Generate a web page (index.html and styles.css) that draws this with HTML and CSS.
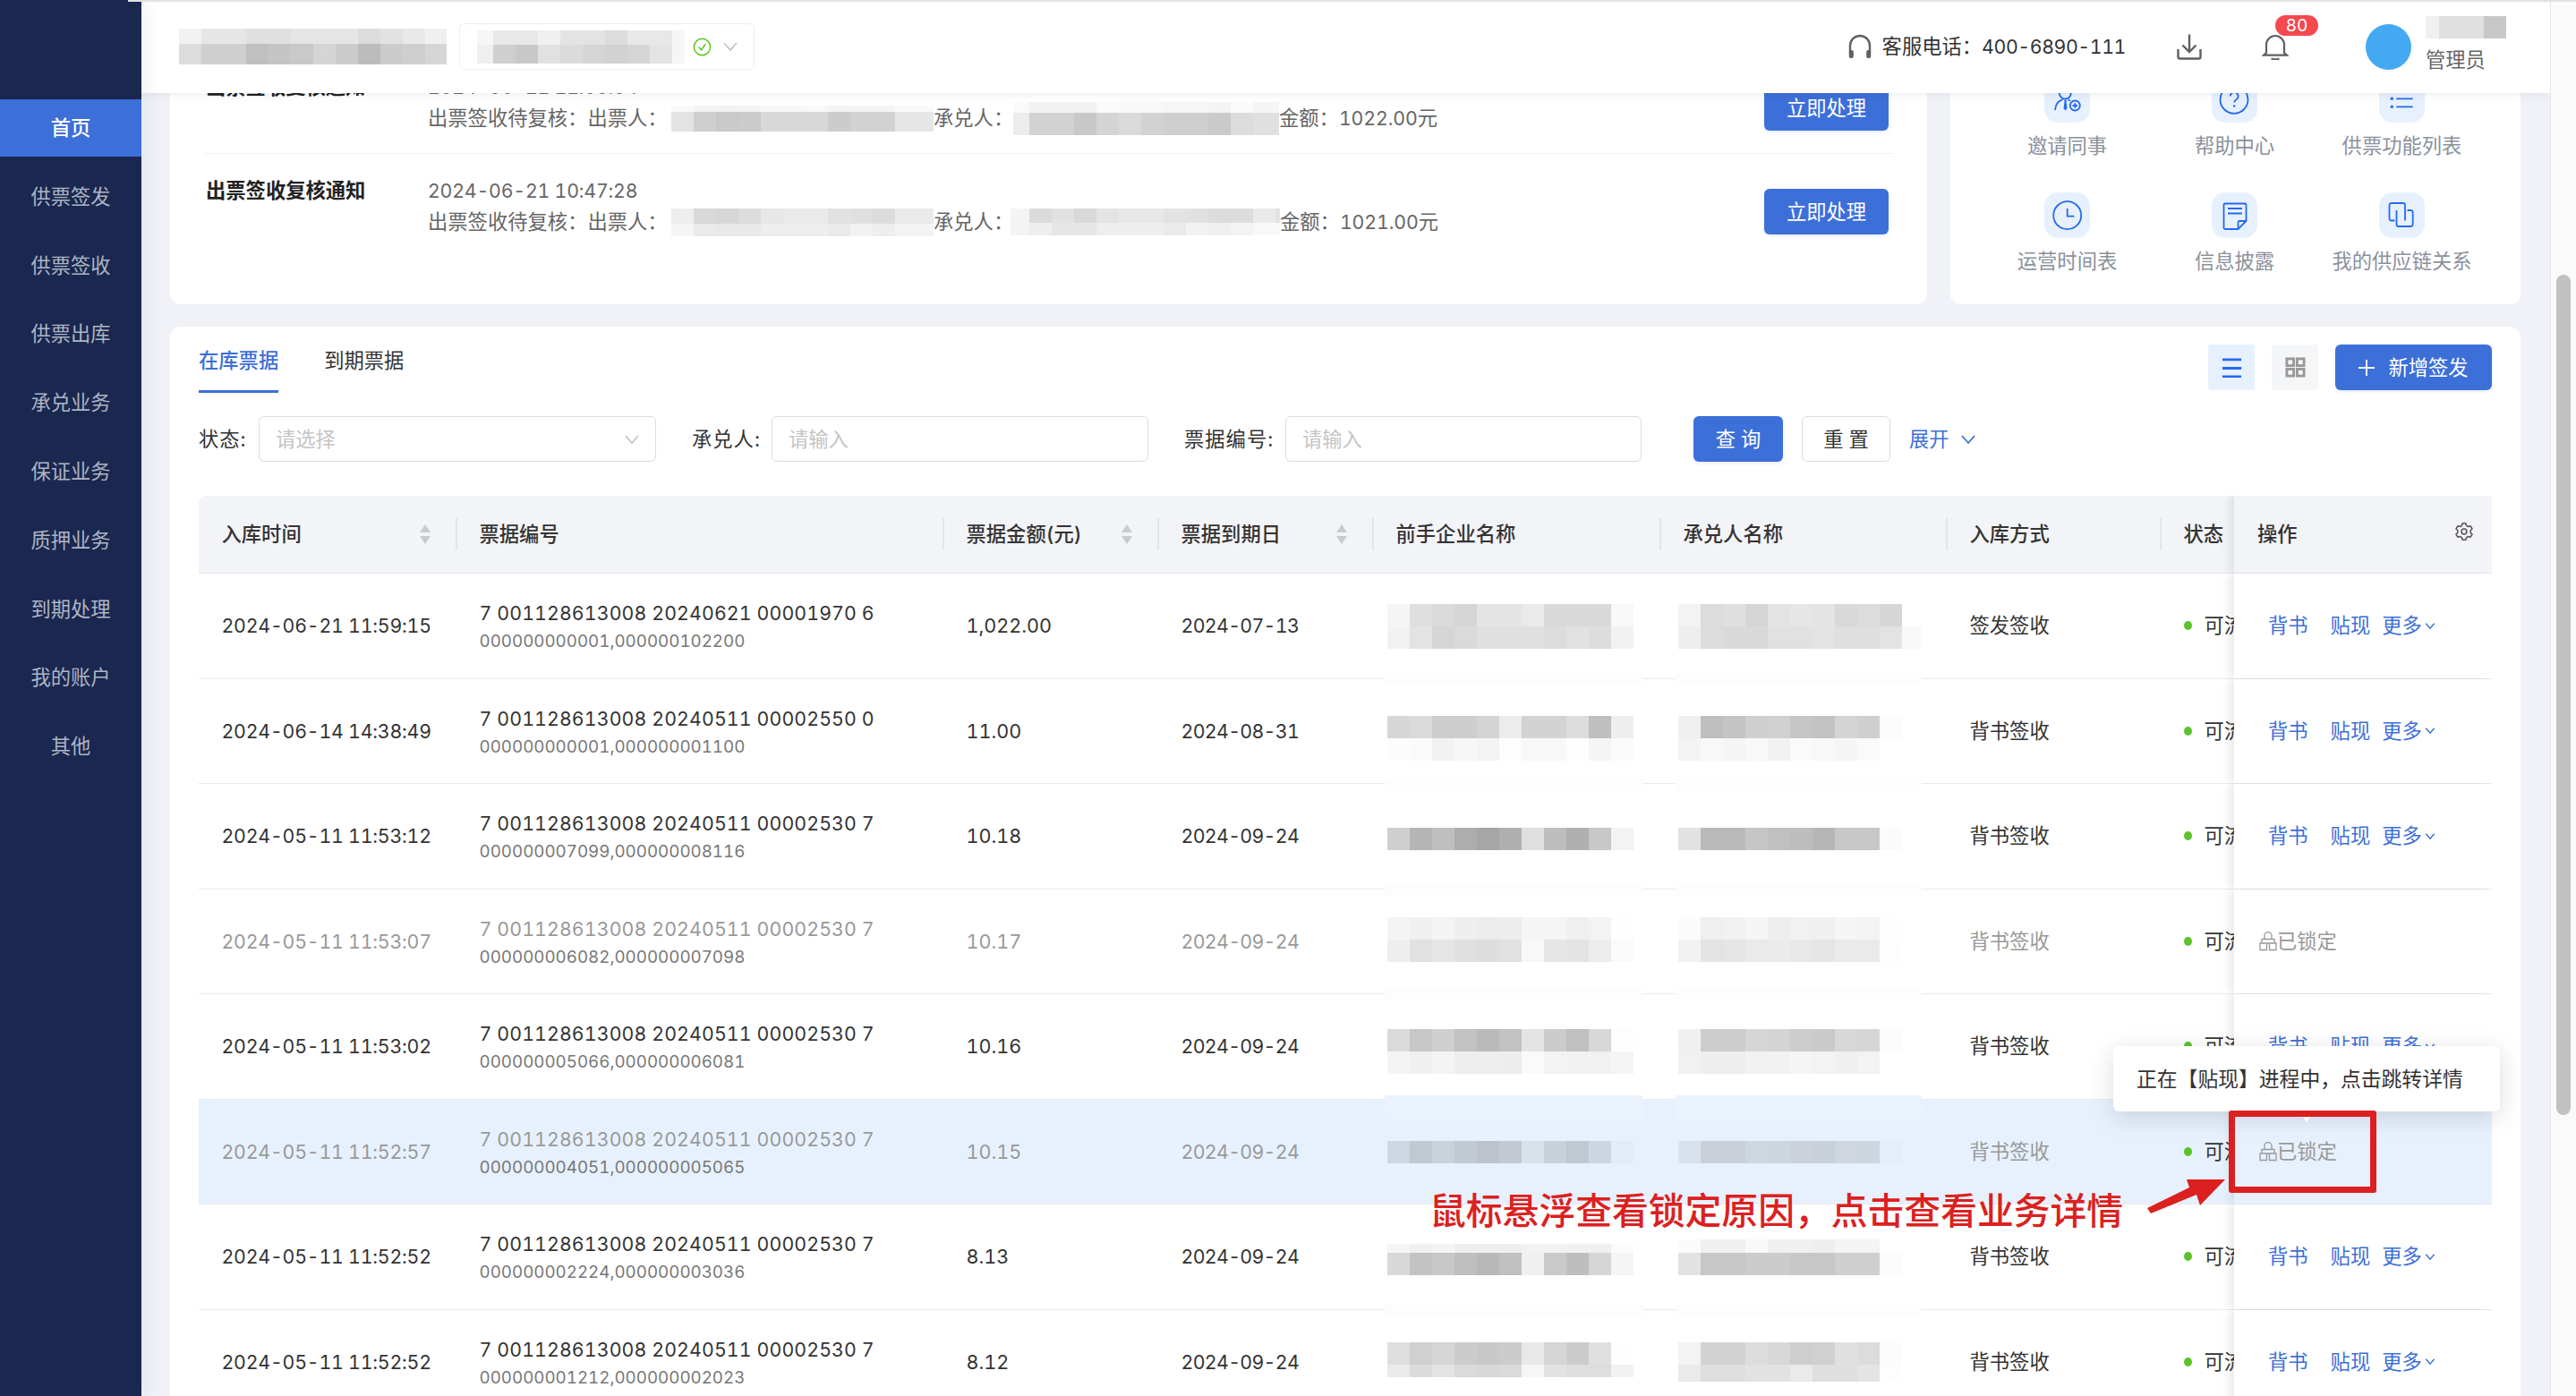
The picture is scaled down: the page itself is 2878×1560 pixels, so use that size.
FILE: index.html
```html
<!DOCTYPE html>
<html lang="zh-CN">
<head>
<meta charset="utf-8">
<title>供票管理</title>
<link rel="stylesheet" href="styles.css">
</head>
<body>
<nav class="sidebar">
  <a class="nav-item active">首页</a>
  <a class="nav-item">供票签发</a>
  <a class="nav-item">供票签收</a>
  <a class="nav-item">供票出库</a>
  <a class="nav-item">承兑业务</a>
  <a class="nav-item">保证业务</a>
  <a class="nav-item">质押业务</a>
  <a class="nav-item">到期处理</a>
  <a class="nav-item">我的账户</a>
  <a class="nav-item">其他</a>
</nav>
<div class="main">
  <header class="topbar">
    <div class="blur h1"><i class="band h1t"></i><i class="band h1b"></i></div>
    <div class="org">
      <div class="blur h2"><i class="band h2t"></i><i class="band h2b"></i></div>
      <svg class="ic-check" viewBox="0 0 22 22"><circle cx="11" cy="11" r="9.6"/><path d="M7 11l3 3.4 5-7"/></svg>
      <svg class="chev chev-org" viewBox="0 0 18 12"><path d="M2 2l7 8 7-8"/></svg>
    </div>
    <div class="top-right">
      <svg class="ic-head" viewBox="0 0 28 28"><path class="ln" d="M3 21V13a11 11 0 0 1 22 0v8"/><rect x="1.8" y="18" width="5" height="9" rx="2"/><rect x="21.2" y="18" width="5" height="9" rx="2"/></svg>
      <span class="phone">客服电话：<span class="tel">400-6890-111</span></span>
      <svg class="ic-down" viewBox="0 0 28 30"><path d="M14 1.5v19M6.5 13.5l7.5 7.5 7.5-7.5M1.5 18v8.5a2 2 0 0 0 2 2h21a2 2 0 0 0 2-2V18"/></svg>
      <div class="bell">
        <svg class="ic-bell" viewBox="0 0 30 30"><path d="M5 22V13a10 10 0 0 1 20 0v9l3 2.6H2z"/><path d="M10.5 28.4c2.8 1.2 6.200 1.200 9 0"/></svg>
        <span class="badge">80</span>
      </div>
      <div class="avatar"></div>
      <div class="user">
        <div class="blur u1"><i class="band u1a"></i></div>
        <div class="role">管理员</div>
      </div>
    </div>
  </header>
  <div class="view">
    <div class="top-row">
      <section class="card notices">
        <div class="notice">
          <h4>出票签收复核通知</h4>
          <div class="notice-body">
            <div class="time">2024-06-21 11:00:04</div>
            <div class="desc">
              <span>出票签收待复核：出票人：</span>
              <div class="blur n1"><i class="band n1a1"></i><i class="band n1a2"></i></div>
              <span>承兑人：</span>
              <div class="blur n2"><i class="band n1b1"></i><i class="band n1b2"></i></div>
              <span>金额：<span class="num">1022.00</span>元</span>
            </div>
          </div>
          <button class="btn primary act">立即处理</button>
        </div>
        <div class="notice">
          <h4>出票签收复核通知</h4>
          <div class="notice-body">
            <div class="time">2024-06-21 10:47:28</div>
            <div class="desc">
              <span>出票签收待复核：出票人：</span>
              <div class="blur n3"><i class="band n2a1"></i><i class="band n2a2"></i></div>
              <span>承兑人：</span>
              <div class="blur n4"><i class="band n2b1"></i><i class="band n2b2"></i></div>
              <span>金额：<span class="num">1021.00</span>元</span>
            </div>
          </div>
          <button class="btn primary act">立即处理</button>
        </div>
      </section>
      <section class="card quick">
        <div class="qk">
          <div class="tile"><svg viewBox="0 0 51 51"><circle cx="23.300" cy="18" r="6.500"/><path d="M12 37c.6-6.500 4.600-10.500 8.500-11.800M26.500 25.500c1 .3 1.800.7 2.500 1.200"/><path class="fill" d="M22 26h3l-.5 2 1 7-2 2.500-2-2.500 1-7z"/><circle cx="34.300" cy="32" r="5.500"/><path d="M31.500 32h5.600M34.300 29.200v5.600"/></svg></div>
          <span>邀请同事</span>
        </div>
        <div class="qk">
          <div class="tile"><svg viewBox="0 0 51 51"><circle cx="25" cy="25.300" r="15.500"/><path d="M20.800 21.500a4.400 4.400 0 1 1 6.900 3.600c-1.500 1-2.500 1.900-2.500 3.400"/><circle class="fill" cx="25.200" cy="32.500" r="1.300"/></svg></div>
          <span>帮助中心</span>
        </div>
        <div class="qk">
          <div class="tile"><svg viewBox="0 0 51 51"><circle class="fill" cx="14.300" cy="15.300" r="1.700"/><circle class="fill" cx="14.300" cy="24.300" r="1.700"/><circle class="fill" cx="14.300" cy="33.300" r="1.700"/><path d="M19.300 15.300h18.400M19.300 24.300h18.400M19.300 33.300h18.400"/></svg></div>
          <span>供票功能列表</span>
        </div>
        <div class="qk">
          <div class="tile"><svg viewBox="0 0 51 51"><circle cx="25.700" cy="25.700" r="15.500"/><path d="M25.700 18v8.700h7.800"/></svg></div>
          <span>运营时间表</span>
        </div>
        <div class="qk">
          <div class="tile"><svg viewBox="0 0 51 51"><path d="M15 12.500h22a1.500 1.500 0 0 1 1.500 1.500v18l-9 9H15a1.500 1.500 0 0 1-1.500-1.500V14a1.500 1.500 0 0 1 1.500-1.500z"/><path d="M38.500 32H31a1.500 1.500 0 0 0-1.500 1.500V41M18 18h16M18 23.500h16"/></svg></div>
          <span>信息披露</span>
        </div>
        <div class="qk">
          <div class="tile"><svg viewBox="0 0 51 51"><path d="M17.500 31.500H13.800a2.300 2.300 0 0 1-2.300-2.300V14.300a2.300 2.300 0 0 1 2.300-2.300h12.900a2.300 2.300 0 0 1 2.300 2.300v17.200"/><path d="M31.500 20h3.900a2.300 2.300 0 0 1 2.300 2.300v13.400a2.300 2.300 0 0 1-2.300 2.300H21.800a2.300 2.300 0 0 1-2.300-2.300V20"/></svg></div>
          <span>我的供应链关系</span>
        </div>
      </section>
    </div>

    <section class="card bills">
      <div class="toolbar">
        <div class="tabs">
          <a class="tab on">在库票据</a>
          <a class="tab">到期票据</a>
        </div>
        <div class="tools">
          <button class="tool on"><svg viewBox="0 0 24 24"><path d="M1 3h22M1 13h22M1 23h22"/></svg></button>
          <button class="tool"><svg viewBox="0 0 24 24"><rect x="2" y="2" width="8" height="8"/><rect x="14" y="2" width="8" height="8"/><rect x="2" y="14" width="8" height="8"/><rect x="14" y="14" width="8" height="8"/></svg></button>
          <button class="btn primary add"><svg viewBox="0 0 18 18"><path d="M9 0v18M0 9h18"/></svg>新增签发</button>
        </div>
      </div>

      <div class="filters">
        <label class="l-a">状态:</label>
        <div class="field w-a"><span>请选择</span><svg class="chev" viewBox="0 0 18 12"><path d="M2 2l7 8 7-8"/></svg></div>
        <label class="l-b">承兑人:</label>
        <div class="field w-b"><span>请输入</span></div>
        <label class="l-c">票据编号:</label>
        <div class="field w-c"><span>请输入</span></div>
        <button class="btn primary query">查 询</button>
        <button class="btn plain reset">重 置</button>
        <a class="expand">展开<svg class="chev blue" viewBox="0 0 18 12"><path d="M2 2l7 8 7-8"/></svg></a>
      </div>

      <div class="table">
        <div class="row head">
          <div class="c th">入库时间<i class="sort"></i></div>
          <div class="c th">票据编号</div>
          <div class="c th">票据金额(元)<i class="sort"></i></div>
          <div class="c th">票据到期日<i class="sort"></i></div>
          <div class="c th">前手企业名称</div>
          <div class="c th">承兑人名称</div>
          <div class="c th">入库方式</div>
          <div class="c th st">状态</div>
          <div class="c ops th-ops">操作<svg class="gear" viewBox="0 0 24 24"><path d="M10 2h4l.8 2.700 2.300 1.300 2.700-.7 2 3.400-2 2v2.600l2 2-2 3.400-2.700-.7-2.300 1.300L14 22h-4l-.8-2.700-2.300-1.300-2.700.7-2-3.400 2-2v-2.600l-2-2 2-3.400 2.700.7 2.300-1.300z"/><circle cx="12" cy="12" r="3.200"/></svg></div>
        </div>

        <div class="row">
          <div class="c d-time">2024-06-21 11:59:15</div>
          <div class="c stack"><div class="no">7 001128613008 20240621 00001970 6</div><div class="sub">000000000001,000000102200</div></div>
          <div class="c d-amt">1,022.00</div>
          <div class="c d-date">2024-07-13</div>
          <div class="c mos a off-34"><div class="blur"><i class="band r1a1"></i><i class="band r1a2"></i></div></div>
          <div class="c mos b off-34"><div class="blur"><i class="band r1b1"></i><i class="band r1b2"></i></div></div>
          <div class="c">签发签收</div>
          <div class="c st"><i class="dot"></i>可流通</div>
          <div class="c ops"><a>背书</a><a>贴现</a><a class="more">更多<svg class="chev blue" viewBox="0 0 18 12"><path d="M2 2l7 8 7-8"/></svg></a></div>
        </div>

        <div class="row">
          <div class="c d-time">2024-06-14 14:38:49</div>
          <div class="c stack"><div class="no">7 001128613008 20240511 00002550 0</div><div class="sub">000000000001,000000001100</div></div>
          <div class="c d-amt">11.00</div>
          <div class="c d-date">2024-08-31</div>
          <div class="c mos a off-41"><div class="blur"><i class="band r2a1"></i><i class="band r2a2"></i></div></div>
          <div class="c mos b off-41"><div class="blur"><i class="band r2b1"></i><i class="band r2b2"></i></div></div>
          <div class="c">背书签收</div>
          <div class="c st"><i class="dot"></i>可流通</div>
          <div class="c ops"><a>背书</a><a>贴现</a><a class="more">更多<svg class="chev blue" viewBox="0 0 18 12"><path d="M2 2l7 8 7-8"/></svg></a></div>
        </div>

        <div class="row">
          <div class="c d-time">2024-05-11 11:53:12</div>
          <div class="c stack"><div class="no">7 001128613008 20240511 00002530 7</div><div class="sub">000000007099,000000008116</div></div>
          <div class="c d-amt">10.18</div>
          <div class="c d-date">2024-09-24</div>
          <div class="c mos a off-49"><div class="blur"><i class="band r3a"></i></div></div>
          <div class="c mos b off-49"><div class="blur"><i class="band r3b"></i></div></div>
          <div class="c">背书签收</div>
          <div class="c st"><i class="dot"></i>可流通</div>
          <div class="c ops"><a>背书</a><a>贴现</a><a class="more">更多<svg class="chev blue" viewBox="0 0 18 12"><path d="M2 2l7 8 7-8"/></svg></a></div>
        </div>

        <div class="row locked">
          <div class="c d-time">2024-05-11 11:53:07</div>
          <div class="c stack"><div class="no">7 001128613008 20240511 00002530 7</div><div class="sub">000000006082,000000007098</div></div>
          <div class="c d-amt">10.17</div>
          <div class="c d-date">2024-09-24</div>
          <div class="c mos a off-31"><div class="blur"><i class="band r4a1"></i><i class="band r4a2"></i></div></div>
          <div class="c mos b off-31"><div class="blur"><i class="band r4b1"></i><i class="band r4b2"></i></div></div>
          <div class="c">背书签收</div>
          <div class="c st"><i class="dot"></i>可流通</div>
          <div class="c ops lock"><svg class="ic-lock" viewBox="0 0 20 22"><path d="M6 8V4.500a4 4 0 0 1 8 0V8M3 8.500h14v4.500H3zM1 13h7.500v7.500H1zM11.500 13H19v7.500h-7.500z"/></svg>已锁定</div>
        </div>

        <div class="row tint-next">
          <div class="c d-time">2024-05-11 11:53:02</div>
          <div class="c stack"><div class="no">7 001128613008 20240511 00002530 7</div><div class="sub">000000005066,000000006081</div></div>
          <div class="c d-amt">10.16</div>
          <div class="c d-date">2024-09-24</div>
          <div class="c mos a off-39"><div class="blur"><i class="band r5a1"></i><i class="band r5a2"></i></div></div>
          <div class="c mos b off-39"><div class="blur"><i class="band r5b1"></i><i class="band r5b2"></i></div></div>
          <div class="c">背书签收</div>
          <div class="c st"><i class="dot"></i>可流通</div>
          <div class="c ops"><a>背书</a><a>贴现</a><a class="more">更多<svg class="chev blue" viewBox="0 0 18 12"><path d="M2 2l7 8 7-8"/></svg></a></div>
        </div>

        <div class="row locked hover">
          <div class="c d-time">2024-05-11 11:52:57</div>
          <div class="c stack"><div class="no">7 001128613008 20240511 00002530 7</div><div class="sub">000000004051,000000005065</div></div>
          <div class="c d-amt">10.15</div>
          <div class="c d-date">2024-09-24</div>
          <div class="c mos a off-46"><div class="blur"><i class="band r6a"></i></div></div>
          <div class="c mos b off-46"><div class="blur"><i class="band r6b"></i></div></div>
          <div class="c">背书签收</div>
          <div class="c st"><i class="dot"></i>可流通</div>
          <div class="c ops lock"><svg class="ic-lock" viewBox="0 0 20 22"><path d="M6 8V4.500a4 4 0 0 1 8 0V8M3 8.500h14v4.500H3zM1 13h7.500v7.500H1zM11.500 13H19v7.500h-7.500z"/></svg>已锁定</div>
        </div>

        <div class="row">
          <div class="c d-time">2024-05-11 11:52:52</div>
          <div class="c stack"><div class="no">7 001128613008 20240511 00002530 7</div><div class="sub">000000002224,000000003036</div></div>
          <div class="c d-amt">8.13</div>
          <div class="c d-date">2024-09-24</div>
          <div class="c mos a off-44"><div class="blur"><i class="band r7a1"></i><i class="band r7a2"></i></div></div>
          <div class="c mos b off-39"><div class="blur"><i class="band r7b1"></i><i class="band r7b2"></i></div></div>
          <div class="c">背书签收</div>
          <div class="c st"><i class="dot"></i>可流通</div>
          <div class="c ops"><a>背书</a><a>贴现</a><a class="more">更多<svg class="chev blue" viewBox="0 0 18 12"><path d="M2 2l7 8 7-8"/></svg></a></div>
        </div>

        <div class="row">
          <div class="c d-time">2024-05-11 11:52:52</div>
          <div class="c stack"><div class="no">7 001128613008 20240511 00002530 7</div><div class="sub">000000001212,000000002023</div></div>
          <div class="c d-amt">8.12</div>
          <div class="c d-date">2024-09-24</div>
          <div class="c mos a off-36"><div class="blur"><i class="band r8a1"></i><i class="band r8a2"></i></div></div>
          <div class="c mos b off-36"><div class="blur"><i class="band r8b1"></i><i class="band r8b2"></i></div></div>
          <div class="c">背书签收</div>
          <div class="c st"><i class="dot"></i>可流通</div>
          <div class="c ops"><a>背书</a><a>贴现</a><a class="more">更多<svg class="chev blue" viewBox="0 0 18 12"><path d="M2 2l7 8 7-8"/></svg></a></div>
        </div>
      </div>
    </section>
  </div>
</div>
<div class="scrollbar"><div class="thumb"></div></div>

<div class="tooltip">正在【贴现】进程中，点击跳转详情</div>
<div class="red-box"></div>
<svg class="red-arrow" viewBox="0 0 100 50"><polygon points="9,40 56,17 53,8 96,8 68,37 64,25 13,46"/></svg>
<div class="red-note">鼠标悬浮查看锁定原因，点击查看业务详情</div>
</body>
</html>
```
FILE: styles.css
```css
* { box-sizing: border-box; }
html, body { margin: 0; padding: 0; }
body {
  position: relative;
  display: flex;
  width: 2878px;
  height: 1560px;
  overflow: hidden;
  background: #f0f2f7;
  color: #333;
  font: 22.300px/30px Inter, "Noto Sans CJK SC", sans-serif;
  font-variant-numeric: tabular-nums;
}
body::before {
  content: "";
  position: absolute;
  left: 143px;
  right: 0;
  top: 0;
  height: 2px;
  background: #e2e2e2;
  z-index: 9;
}
i { font-style: normal; }
h4 { margin: 0; }
button { font: inherit; padding: 0; cursor: pointer; }

/* numeric text */
.time, .d-time { font-size: 21.300px; letter-spacing: -.2px; }
.no { font-size: 21.300px; letter-spacing: .12px; }
.d-date { font-size: 21.300px; letter-spacing: -.65px; }
.d-amt { font-size: 21.600px; }
.num { font-size: 21.300px; letter-spacing: -.1px; }
.tel { font-size: 21.300px; letter-spacing: -.4px; }

/* sidebar */
.sidebar {
  flex: 0 0 158px;
  padding-top: 111px;
  background: #1a2850;
  box-shadow: 8px 0 16px rgba(30, 40, 80, .05);
  position: relative;
  z-index: 6;
}
.nav-item {
  display: flex;
  align-items: center;
  justify-content: center;
  height: 64px;
  margin-bottom: 12.8px;
  color: #aeb4c3;
}
.nav-item.active { background: #3d6fd8; color: #fff; font-weight: 500; }

/* main column */
.main { flex: 1; min-width: 0; display: flex; flex-direction: column; }
.topbar {
  flex: 0 0 104px;
  display: flex;
  align-items: center;
  padding: 0 49px 0 42px;
  background: #fff;
  box-shadow: 0 2px 10px rgba(0, 0, 0, .07);
  position: relative;
  z-index: 5;
}
.org {
  display: flex;
  align-items: center;
  width: 330px;
  height: 52px;
  margin-left: 14px;
  padding-left: 19px;
  border: 1px solid #eeeeee;
  border-radius: 6px;
}
.ic-check { width: 21px; height: 21px; margin-left: 9px; fill: none; stroke: #52c41a; stroke-width: 1.500; }
.chev { width: 18px; height: 12px; fill: none; stroke: #c0c0c0; stroke-width: 1.500; flex: none; }
.chev.blue { stroke: #3d6fd8; stroke-width: 1.800; }
.chev-org { margin-left: 12px; }
.top-right { margin-left: auto; display: flex; align-items: center; }
.ic-head { width: 28px; height: 28px; fill: #5f5f5f; }
.ic-head .ln { fill: none; stroke: #5f5f5f; stroke-width: 2.400; }
.phone { margin-left: 11px; color: #333; }
.ic-down { width: 28px; height: 30px; margin-left: 57px; fill: none; stroke: #5f5f5f; stroke-width: 2.400; }
.bell { position: relative; margin-left: 67px; height: 30px; }
.ic-bell { display: block; width: 30px; height: 30px; fill: none; stroke: #5f5f5f; stroke-width: 2.200; }
.badge {
  position: absolute;
  left: 15px;
  top: -20px;
  width: 48px;
  height: 23px;
  border-radius: 12px;
  background: #f5484f;
  color: #fff;
  font-size: 19px;
  line-height: 23px;
  text-align: center;
}
.avatar { width: 51px; height: 51px; margin-left: 86px; border-radius: 50%; background: #43a9f2; }
.user { margin-left: 16px; width: 90px; }
.role { color: #666; line-height: 30px; margin-top: 9px; }

/* scrolled content */
.view { flex: 1; min-height: 0; overflow: hidden; padding: 0 33px 0 32px; }
.top-row { display: flex; gap: 26px; height: 296px; margin-top: -60px; }
.card { background: #fff; border-radius: 12px; }
.notices { width: 1963px; padding: 12px 38px 0; }
.notice {
  display: flex;
  height: 116px;
  padding-top: 26px;
  border-bottom: 1px solid #f2f2f2;
}
.notice:last-child { border-bottom: 0; }
.notice h4 { width: 250px; padding-left: 2px; font-size: 22.300px; font-weight: 600; color: #222; white-space: nowrap; }
.notice-body { flex: 1; color: #666; }
.desc { display: flex; align-items: center; height: 30px; margin-top: 5px; white-space: nowrap; }
.desc > span:first-child { width: 264px; }
.desc > span:nth-child(3) { width: 88px; }
.btn { border: 0; border-radius: 6px; white-space: nowrap; }
.btn.primary { background: #3d6fd8; color: #fff; box-shadow: 0 2px 4px rgba(61, 111, 216, .12); }
.act { width: 139px; height: 51px; margin: 13px 5px 0 0; }

.quick {
  width: 637px;
  padding: 42px 38px 0 37px;
  display: grid;
  grid-template-columns: repeat(3, 187px);
  grid-auto-rows: 92px;
  row-gap: 37px;
  justify-items: center;
  color: #8b919c;
}
.qk { display: flex; flex-direction: column; align-items: center; white-space: nowrap; }
.qk span { margin-top: 11px; }
.tile { width: 51px; height: 51px; border-radius: 15px; background: #e7f1fe; }
.tile svg { display: block; width: 51px; height: 51px; fill: none; stroke: #2468f2; stroke-width: 1.800; stroke-linejoin: round; }
.tile svg .fill { fill: #2468f2; stroke: none; }

/* bills card */
.bills { margin-top: 25px; height: 1300px; padding: 20px 32px 0; }
.toolbar { display: flex; height: 54px; }
.tabs { display: flex; gap: 51px; }
.tab { display: block; height: 54px; line-height: 36px; color: #333; }
.tab.on { color: #3d6fd8; border-bottom: 3px solid #3d6fd8; font-weight: 500; }
.tools { margin-left: auto; display: flex; gap: 19px; height: 51px; }
.tool { width: 52px; height: 51px; border: 0; border-radius: 3px; background: #f5f6f8; display: flex; align-items: center; justify-content: center; }
.tool svg { width: 23px; height: 23px; fill: none; stroke: #999; stroke-width: 3; }
.tool.on { background: #e7f1fe; }
.tool.on svg { stroke: #2468f2; stroke-width: 3; }
.add { width: 175px; height: 51px; display: flex; align-items: center; justify-content: center; }
.add svg { width: 18px; height: 18px; margin-right: 15px; fill: none; stroke: #fff; stroke-width: 1.800; }

.filters { display: flex; align-items: center; height: 51px; margin-top: 26px; }
.filters label { letter-spacing: 1px; white-space: nowrap; }
.l-a { width: 67px; }
.l-b { width: 89px; margin-left: 40px; }
.l-c { width: 113px; margin-left: 40px; }
.field {
  display: flex;
  align-items: center;
  justify-content: space-between;
  height: 51px;
  padding: 0 17px 0 18px;
  border: 1.500px solid #dcdcdc;
  border-radius: 6px;
  color: #c4c4c4;
}
.w-a { width: 444px; }
.w-b { width: 421px; }
.w-c { width: 398px; }
.query { width: 100px; height: 51px; margin-left: 58px; }
.plain { background: #fff; border: 1.500px solid #dcdcdc; color: #333; }
.reset { width: 99px; height: 51px; margin-left: 21px; }
.expand { margin-left: 21px; display: flex; align-items: center; color: #3d6fd8; }
.expand .chev { margin-left: 12px; }

/* table */
.table { margin-top: 38px; }
.row {
  display: grid;
  grid-template-columns: 287px 544px 240px 240px 321px 320px 239px 83px 288px;
  height: 117.5px;
  border-bottom: 1.500px solid #e9eaee;
}
.row.head { height: 87px; background: #f3f4f8; border-radius: 8px 8px 0 0; font-weight: 500; border-bottom-color: #e6e7ec; }
.c { display: flex; align-items: center; padding-left: 26.500px; white-space: nowrap; min-width: 0; }
.row > .c:first-child { padding-left: 25.500px; }
.th { position: relative; }
.th + .th::before {
  content: "";
  position: absolute;
  left: 0;
  top: 25px;
  width: 2px;
  height: 36px;
  background: #e4e5ea;
}
.sort { position: relative; width: 13px; height: 22px; margin-left: auto; margin-right: 27px; }
.sort::before, .sort::after {
  content: "";
  position: absolute;
  left: 0;
  border-left: 6.500px solid transparent;
  border-right: 6.500px solid transparent;
}
.sort::before { top: 0; border-bottom: 9px solid #c9cbd1; }
.sort::after { bottom: 0; border-top: 9px solid #c9cbd1; }
.stack { display: block; padding-top: 29px; }
.no { line-height: 30px; }
.sub { color: #777; font-size: 18.750px; line-height: 30px; margin-top: 2px; }
.st { overflow: hidden; }
.dot { flex: none; width: 9px; height: 10px; border-radius: 50%; background: #5ac32a; margin-right: 14px; }
.ops {
  position: relative;
  z-index: 2;
  background: #fff;
  padding-left: 38px;
  color: #3d6fd8;
  box-shadow: -5px 0 10px rgba(0, 0, 0, .09);
  clip-path: inset(0 0 -2px -16px);
}
.ops a + a { margin-left: 25px; }
.ops .more { display: flex; align-items: center; margin-left: 13px; }
.more .chev { width: 12px; height: 9px; margin-left: 3px; stroke-width: 2.200; }
.th-ops { background: #f3f4f8; color: #333; padding-left: 26px; }
.gear { width: 22px; height: 24px; margin-left: auto; margin-right: 20px; margin-top: -6px; fill: none; stroke: #555; stroke-width: 1.700; stroke-linejoin: round; }
.lock { padding-left: 28px; color: #999; }
.ic-lock { width: 20px; height: 22px; fill: none; stroke: #999; stroke-width: 1.300; }
.locked > .c:not(.ops):not(.st), .locked .no { color: #999; }
.locked .sub { color: #777; }
.hover { background: #e7f1fe; }
.hover .ops { background: #e7f1fe; }

/* mosaics */
.blur { flex: none; }
.band { display: block; width: 275px; height: 25px; }
.mos { position: relative; align-items: flex-start; }
.mos.a { padding-left: 17px; }
.mos.b { padding-left: 21px; }
.off-34 { padding-top: 34px; }
.off-41 { padding-top: 41.500px; }
.off-49 { padding-top: 49px; }
.off-31 { padding-top: 31.500px; }
.off-39 { padding-top: 39px; }
.off-46 { padding-top: 46.500px; }
.off-44 { padding-top: 44px; }
.off-36 { padding-top: 36.500px; }
.mos::after {
  content: "";
  position: absolute;
  bottom: -8px;
  height: 14px;
  background: #fdfdfd;
}
.mos.a::after { left: 14px; width: 288px; }
.mos.b::after { left: 18px; width: 275px; }
.tint-next .mos::after { background: #eaf3fd; bottom: -22px; height: 26px; }
.hover .mos::after { display: none; }
.r1b2 { width: 272px; }
.r7a1 { height: 10px; }
.r7b1 { height: 15px; }
.r8a2 { height: 14px; }
.r8b2 { height: 19px; }

.r1a1 { background: linear-gradient(90deg,#f5f5f5 25px,#dfdfdf 0 50px,#dadada 0 75px,#d5d5d5 0 100px,#e4e4e4 0 150px,#eaeaea 0 175px,#d9d9d9 0 250px,#f8f8f8 0); }
.r1a2 { background: linear-gradient(90deg,#f2f2f2 25px,#e3e3e3 0 50px,#d5d5d5 0 75px,#dadada 0 100px,#e0e0e0 0 175px,#dcdcdc 0 200px,#e2e2e2 0 225px,#dddddd 0 250px,#f2f2f2 0); }
.r1b1 { background: linear-gradient(90deg,#f3f3f3 25px,#dcdcdc 0 50px,#dfdfdf 0 75px,#d5d5d5 0 100px,#e3e3e3 0 125px,#e6e6e6 0 150px,#e4e4e4 0 175px,#d9d9d9 0 200px,#dcdcdc 0 225px,#d6d6d6 0 250px,transparent 0); }
.r1b2 { background: linear-gradient(90deg,#eeeeee 25px,#dcdcdc 0 50px,#d9d9d9 0 100px,#e1e1e1 0 150px,#e3e3e3 0 175px,#dfdfdf 0 225px,#e3e3e3 0 250px,#f9f9f9 0); }
.r2a1 { background: linear-gradient(90deg,#d6d6d6 25px,#dadada 0 50px,#cdcdcd 0 100px,#d4d4d4 0 125px,#ececec 0 150px,#d3d3d3 0 200px,#dddddd 0 225px,#bfbfbf 0 250px,#eeeeee 0); }
.r2a2 { background: linear-gradient(90deg,#fcfcfc 25px,#fafafa 0 50px,#f2f2f2 0 75px,#f7f7f7 0 100px,#f3f3f3 0 125px,#fdfdfd 0 150px,#f8f8f8 0 200px,#fefefe 0 225px,#f5f5f5 0 250px,#fbfbfb 0); }
.r2b1 { background: linear-gradient(90deg,#f0f0f0 25px,#bfbfbf 0 50px,#c4c4c4 0 75px,#cfcfcf 0 100px,#d1d1d1 0 125px,#c6c6c6 0 150px,#c3c3c3 0 175px,#d4d4d4 0 200px,#cfcfcf 0 225px,#fcfcfc 0 250px,transparent 0); }
.r2b2 { background: linear-gradient(90deg,#f3f3f3 25px,#f8f8f8 0 50px,#f5f5f5 0 75px,#f8f8f8 0 100px,#f2f2f2 0 125px,#fafafa 0 150px,#f8f8f8 0 175px,#f5f5f5 0 200px,#fafafa 0 225px,transparent 0); }
.r3a { background: linear-gradient(90deg,#cfcfcf 25px,#b5b5b5 0 50px,#bfbfbf 0 75px,#adadad 0 100px,#a6a6a6 0 125px,#b0b0b0 0 150px,#e0e0e0 0 175px,#bdbdbd 0 200px,#b0b0b0 0 225px,#c8c8c8 0 250px,#f3f3f3 0); }
.r3b { background: linear-gradient(90deg,#e2e2e2 25px,#b9b9b9 0 75px,#c6c6c6 0 100px,#c0c0c0 0 125px,#bdbdbd 0 150px,#b6b6b6 0 175px,#c7c7c7 0 225px,#fbfbfb 0 250px,transparent 0); }
.r4a1 { background: linear-gradient(90deg,#f4f4f4 25px,#f0f0f0 0 50px,#f4f4f4 0 75px,#eeeeee 0 100px,#ececec 0 125px,#ededed 0 150px,#f5f5f5 0 200px,#efefef 0 225px,#f3f3f3 0 250px,#fefefe 0); }
.r4a2 { background: linear-gradient(90deg,#eeeeee 25px,#e1e1e1 0 50px,#e5e5e5 0 75px,#e0e0e0 0 100px,#dddddd 0 125px,#e1e1e1 0 150px,#f8f8f8 0 175px,#e5e5e5 0 200px,#e3e3e3 0 225px,#ececec 0 250px,#fafafa 0); }
.r4b1 { background: linear-gradient(90deg,#fbfbfb 25px,#efefef 0 50px,#f1f1f1 0 75px,#f5f5f5 0 100px,#eeeeee 0 125px,#f1f1f1 0 150px,#f0f0f0 0 175px,#f5f5f5 0 200px,#f3f3f3 0 225px,#fefefe 0 250px,transparent 0); }
.r4b2 { background: linear-gradient(90deg,#f2f2f2 25px,#e3e3e3 0 50px,#e5e5e5 0 75px,#eaeaea 0 100px,#ebebeb 0 125px,#e8e8e8 0 150px,#e5e5e5 0 175px,#eaeaea 0 225px,#fdfdfd 0 250px,transparent 0); }
.r5a1 { background: linear-gradient(90deg,#dadada 25px,#c7c7c7 0 50px,#cfcfcf 0 75px,#c2c2c2 0 100px,#bababa 0 125px,#c2c2c2 0 150px,#e4e4e4 0 175px,#cccccc 0 200px,#c0c0c0 0 225px,#d8d8d8 0 250px,#fdfdfd 0); }
.r5a2 { background: linear-gradient(90deg,#f4f4f4 25px,#f0f0f0 0 50px,#f4f4f4 0 75px,#eeeeee 0 125px,#ededed 0 150px,#fafafa 0 175px,#f3f3f3 0 200px,#f1f1f1 0 250px,#f5f5f5 0); }
.r5b1 { background: linear-gradient(90deg,#f0f0f0 25px,#cdcdcd 0 75px,#d6d6d6 0 100px,#d4d4d4 0 125px,#cdcdcd 0 150px,#cacaca 0 175px,#d8d8d8 0 200px,#d6d6d6 0 225px,#fcfcfc 0 250px,transparent 0); }
.r5b2 { background: linear-gradient(90deg,#f1f1f1 25px,#eeeeee 0 75px,#f2f2f2 0 125px,#f5f5f5 0 150px,#f3f3f3 0 175px,#f0f0f0 0 200px,#f3f3f3 0 225px,transparent 0); }
.r6a { background: linear-gradient(90deg,#cfd8e2 25px,#c0c8d2 0 50px,#c9d1da 0 75px,#c1c9d2 0 100px,#bcc3cc 0 125px,#c2c9d2 0 150px,#d9e1ea 0 175px,#c8d0d9 0 200px,#c0c8d1 0 225px,#cdd5e0 0 250px,#e3ebf6 0); }
.r6b { background: linear-gradient(90deg,#d9e1ec 25px,#c8cfd8 0 75px,#ced6e0 0 100px,#cdd5df 0 125px,#cbd2dc 0 150px,#c8d0d9 0 175px,#cfd6e0 0 200px,#cdd5df 0 225px,#e4eefa 0 250px,transparent 0); }
.r7a1 { background: linear-gradient(90deg,#f5f5f5 25px,#f0f0f0 0 50px,#f4f4f4 0 75px,#eeeeee 0 150px,#f2f2f2 0 200px,#f0f0f0 0 250px,#fbfbfb 0); }
.r7a2 { background: linear-gradient(90deg,#d8d8d8 25px,#c2c2c2 0 50px,#c8c8c8 0 75px,#bfbfbf 0 100px,#b8b8b8 0 125px,#c0c0c0 0 150px,#f0f0f0 0 175px,#c9c9c9 0 200px,#bebebe 0 225px,#d6d6d6 0 250px,#f5f5f5 0); }
.r7b1 { background: linear-gradient(90deg,#fbfbfb 25px,#f0f0f0 0 75px,#f8f8f8 0 100px,#f0f0f0 0 150px,#eeeeee 0 175px,#f4f4f4 0 225px,transparent 0); }
.r7b2 { background: linear-gradient(90deg,#e2e2e2 25px,#c7c7c7 0 75px,#cccccc 0 125px,#c7c7c7 0 175px,#cfcfcf 0 225px,#fcfcfc 0 250px,transparent 0); }
.r8a1 { background: linear-gradient(90deg,#dedede 25px,#d0d0d0 0 50px,#d5d5d5 0 75px,#cccccc 0 100px,#c8c8c8 0 125px,#cccccc 0 150px,#e8e8e8 0 175px,#d5d5d5 0 200px,#cccccc 0 225px,#e0e0e0 0 250px,#fefefe 0); }
.r8a2 { background: linear-gradient(90deg,#eaeaea 25px,#dbdbdb 0 50px,#e3e3e3 0 75px,#dadada 0 100px,#d8d8d8 0 125px,#dadada 0 150px,#f6f6f6 0 175px,#e2e2e2 0 200px,#dedede 0 250px,#f2f2f2 0); }
.r8b1 { background: linear-gradient(90deg,#f3f3f3 25px,#d3d3d3 0 75px,#dddddd 0 100px,#d8d8d8 0 125px,#cecece 0 150px,#d0d0d0 0 175px,#e0e0e0 0 200px,#dcdcdc 0 225px,#fcfcfc 0 250px,transparent 0); }
.r8b2 { background: linear-gradient(90deg,#eaeaea 25px,#dedede 0 75px,#e2e2e2 0 125px,#eaeaea 0 150px,#dfdfdf 0 200px,#e4e4e4 0 225px,#fdfdfd 0 250px,transparent 0); }

/* header and notice mosaics */
.h1 .band { width: 299px; }
.h1t { height: 17px; background: linear-gradient(90deg,#f2f2f2 25px,#e6e6e6 0 75px,#e0e0e0 0 125px,#e5e5e5 0 200px,#dcdcdc 0 225px,#e2e2e2 0 250px,#e9e9e9 0 275px,#f0f0f0 0); }
.h1b { height: 23px; background: linear-gradient(90deg,#dcdcdc 25px,#cfcfcf 0 75px,#c0c0c0 0 100px,#c5c5c5 0 125px,#c9c9c9 0 150px,#d5d5d5 0 175px,#cccccc 0 200px,#bcbcbc 0 225px,#cccccc 0 250px,#cfcfcf 0 275px,#d6d6d6 0); }
.h2 .band { width: 232px; }
.h2t { height: 16px; background: linear-gradient(90deg,#f6f6f6 18px,#e8e8e8 0 68px,#f0f0f0 0 93px,#e3e3e3 0 143px,#dcdcdc 0 168px,#e8e8e8 0 218px,#f6f6f6 0); }
.h2b { height: 21px; background: linear-gradient(90deg,#efefef 18px,#cfcfcf 0 43px,#c8c8c8 0 68px,#e1e1e1 0 93px,#dbdbdb 0 118px,#d5d5d5 0 143px,#d2d2d2 0 168px,#d6d6d6 0 193px,#e4e4e4 0 218px,#f6f6f6 0); }
.u1 { margin-top: -4px; }
.u1 .band { width: 90px; height: 25px; background: linear-gradient(90deg,#f0f0f0 15px,#e0e0e0 0 65px,#c8c8c8 0); }
.n1 { margin-left: 8px; }
.n1 .band { width: 293px; }
.n1a1 { height: 7px; background: linear-gradient(90deg,#f9f9f9 25px,#f3f3f3 0 50px,#f2f2f2 0 75px,#f4f4f4 0 100px,#f7f7f7 0 125px,#f8f8f8 0 150px,#f9f9f9 0 175px,#f4f4f4 0 250px,#f9f9f9 0); }
.n1a2 { height: 22px; background: linear-gradient(90deg,#e3e3e3 25px,#cfcfcf 0 50px,#c9c9c9 0 75px,#cbcbcb 0 100px,#d8d8d8 0 175px,#cccccc 0 200px,#d2d2d2 0 250px,#e6e6e6 0); }
.n2 { margin-left: 1px; margin-right: 0; }
.n2 .band { width: 297px; }
.n1b1 { height: 12px; background: linear-gradient(90deg,#fafafa 18px,#f2f2f2 0 93px,#fafafa 0 118px,#f8f8f8 0 168px,#f6f6f6 0 218px,#f4f4f4 0 243px,#fbfbfb 0 268px,#f5f5f5 0); }
.n1b2 { height: 25px; background: linear-gradient(90deg,#ececec 18px,#d2d2d2 0 68px,#c8c8c8 0 93px,#d4d4d4 0 118px,#dadada 0 143px,#d2d2d2 0 168px,#cfcfcf 0 218px,#cacaca 0 243px,#dcdcdc 0 268px,#e0e0e0 0); }
.n3 { margin-left: 8px; margin-right: 0; }
.n3 .band { width: 293px; }
.n2a1 { height: 17px; background: linear-gradient(90deg,#eeeeee 25px,#d9d9d9 0 50px,#d6d6d6 0 75px,#dcdcdc 0 100px,#e7e7e7 0 125px,#eaeaea 0 175px,#e2e2e2 0 200px,#e0e0e0 0 225px,#dcdcdc 0 250px,#eaeaea 0); }
.n2a2 { height: 14px; background: linear-gradient(90deg,#f5f5f5 25px,#eaeaea 0 50px,#e8e8e8 0 100px,#eeeeee 0 175px,#eaeaea 0 200px,#f2f2f2 0 225px,#eeeeee 0 250px,#f4f4f4 0); }
.n4 { margin-left: -2px; margin-right: 0; }
.n4 .band { width: 301px; }
.n2b1 { height: 16px; background: linear-gradient(90deg,#f4f4f4 21px,#dbdbdb 0 46px,#e2e2e2 0 71px,#d8d8d8 0 96px,#e4e4e4 0 121px,#e8e8e8 0 171px,#e3e3e3 0 196px,#e1e1e1 0 221px,#dcdcdc 0 271px,#eaeaea 0 296px,#e2e2e2 0); }
.n2b2 { height: 14px; background: linear-gradient(90deg,#f4f4f4 21px,#eeeeee 0 46px,#e6e6e6 0 96px,#eeeeee 0 171px,#eaeaea 0 196px,#f2f2f2 0 221px,#f0f0f0 0 246px,#f4f4f4 0 271px,#f8f8f8 0); }

/* scrollbar */
.scrollbar { flex: 0 0 29px; padding: 307px 0 0 6px; background: #fafafa; border-left: 1px solid #e8e8e8; position: relative; z-index: 6; }
.thumb { width: 16px; height: 939px; border-radius: 8px; background: #c1c1c1; }

/* overlays */
.tooltip {
  position: absolute;
  left: 2361px;
  top: 1169px;
  width: 432px;
  height: 73px;
  padding-left: 26px;
  background: #fff;
  border-radius: 6px;
  font-size: 22.800px;
  line-height: 73px;
  color: #333;
  white-space: nowrap;
  box-shadow: 0 6px 28px rgba(0, 0, 0, .14);
  z-index: 10;
}
.tooltip::after {
  content: "";
  position: absolute;
  left: 208px;
  top: 73px;
  border-left: 8px solid transparent;
  border-right: 8px solid transparent;
  border-top: 12px solid #fff;
}
.red-box {
  position: absolute;
  left: 2490px;
  top: 1241px;
  width: 165px;
  height: 92px;
  border: 7px solid #dc2020;
  border-radius: 3px;
  z-index: 11;
}
.red-arrow { position: absolute; left: 2390px; top: 1310px; width: 100px; height: 50px; fill: #dc2020; z-index: 11; }
.red-note {
  position: absolute;
  left: 1597px;
  top: 1328px;
  font-size: 40.800px;
  line-height: 50px;
  font-weight: 500;
  color: #dc2020;
  white-space: nowrap;
  z-index: 11;
}
```
